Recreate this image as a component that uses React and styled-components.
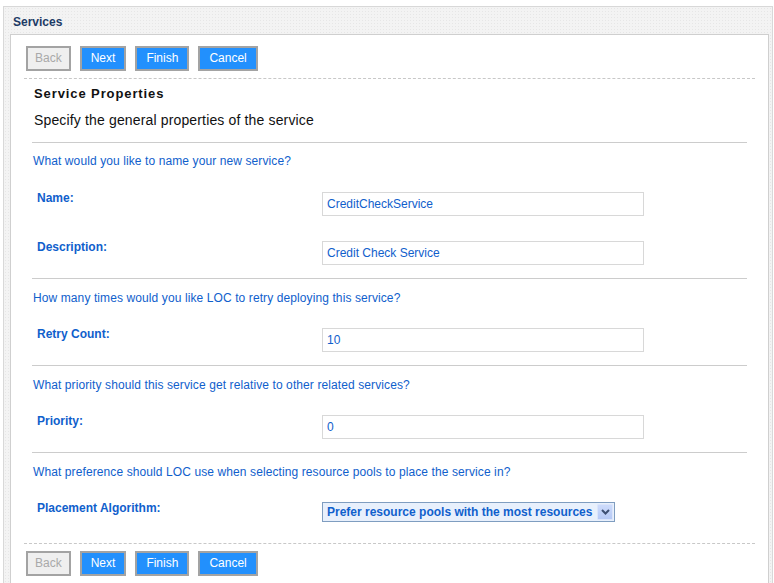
import React from 'react';
import styled, { createGlobalStyle } from 'styled-components';

const GlobalStyle = createGlobalStyle`
  html, body {
    margin: 0;
    padding: 0;
    background: #ffffff;
    font-family: "Liberation Sans", Arial, sans-serif;
  }
`;

const Panel = styled.div`
  margin: 6px 1px 0 3px;
  border: 1px solid #d8d8d8;
  border-bottom: none;
  background-color: #f3f3f3;
  background-image: radial-gradient(#e6e6e6 0.6px, transparent 0.6px);
  background-size: 3px 3px;
  padding: 0 3px 0 6px;
`;

const PanelHeader = styled.div`
  height: 27px;
  line-height: 30px;
  padding-left: 3px;
  font-size: 12px;
  font-weight: bold;
  color: #1d3b66;
`;

const Content = styled.div`
  background: #ffffff;
  border: 1px solid #cfcfcf;
  border-bottom: none;
  padding: 11px 13px 8px 13px;
`;

const ButtonBar = styled.div`
  display: flex;
  gap: 9px;
  padding-left: 2px;
`;

const Button = styled.button`
  height: 25px;
  padding: 0 ${p => (p.disabled ? '7px' : '9px')};
  font-family: "Liberation Sans", Arial, sans-serif;
  font-size: 12px;
  line-height: 19px;
  border: 2px solid #a3a3a3;
  background: ${p => (p.disabled ? '#efefef' : '#2290fd')};
  color: ${p => (p.disabled ? '#a9a9a9' : '#ffffff')};
  cursor: ${p => (p.disabled ? 'default' : 'pointer')};
`;

const DashedRule = styled.div`
  border-top: 1px dashed #c8c8c8;
  margin: ${p => p.$margin};
`;

const Main = styled.div`
  padding: 0 8px;
`;

const Title = styled.div`
  font-size: 13px;
  font-weight: bold;
  line-height: 15px;
  color: #111;
  padding-left: 2px;
  letter-spacing: 0.9px;
`;

const Subtitle = styled.div`
  font-size: 14px;
  line-height: 18px;
  color: #111;
  padding-left: 2px;
  margin-top: 10px;
  padding-bottom: 13px;
  letter-spacing: 0.15px;
`;

const Section = styled.div`
  border-top: 1px solid #cccccc;
  padding: ${p => (p.$first ? '10px' : '11px')} 0 13px 0;
`;

const Question = styled.div`
  font-size: 12px;
  line-height: 16px;
  color: #1060cc;
  padding-left: 1px;
  letter-spacing: 0.1px;
  margin-bottom: ${p => (p.$first ? '23px' : '22px')};
`;

const Row = styled.div`
  display: grid;
  grid-template-columns: 290px 322px;
  align-items: start;
  & + & {
    margin-top: 25px;
  }
`;

const Label = styled.div`
  font-size: 12px;
  font-weight: bold;
  line-height: 14px;
  color: #1060cc;
  padding-left: 5px;
  margin-top: -1px;
`;

const TextInput = styled.input`
  box-sizing: border-box;
  width: 322px;
  height: 24px;
  border: 1px solid #d8d8d8;
  padding: 0 4px;
  font-family: "Liberation Sans", Arial, sans-serif;
  font-size: 12px;
  color: #1060cc;
  outline: none;
`;

const SelectBox = styled.div`
  box-sizing: border-box;
  width: 293px;
  height: 20px;
  display: flex;
  align-items: center;
  justify-content: space-between;
  border: 1px solid #7f9dc0;
  background: #e8f0fc;
  padding: 0 1px 0 4px;
  font-size: 12px;
  font-weight: bold;
  color: #1060cc;
  white-space: nowrap;
`;

const ArrowBox = styled.span`
  width: 16px;
  height: 16px;
  display: flex;
  align-items: center;
  justify-content: center;
  background: linear-gradient(#cddbfb, #b6c9f5);
  border: 1px solid #dbe5fb;
  border-radius: 1px;
  box-sizing: border-box;
`;

const BottomSection = styled(Section)`
  padding-bottom: 21px;
`;

const Buttons = () => (
  <ButtonBar>
    <Button disabled>Back</Button>
    <Button>Next</Button>
    <Button>Finish</Button>
    <Button>Cancel</Button>
  </ButtonBar>
);

export default function App() {
  return (
    <>
      <GlobalStyle />
      <Panel>
        <PanelHeader>Services</PanelHeader>
        <Content>
          <Buttons />
          <DashedRule $margin="7px 0 7px 0" />
          <Main>
            <Title>Service Properties</Title>
            <Subtitle>Specify the general properties of the service</Subtitle>

            <Section $first>
              <Question $first>What would you like to name your new service?</Question>
              <Row>
                <Label>Name:</Label>
                <TextInput defaultValue="CreditCheckService" />
              </Row>
              <Row>
                <Label>Description:</Label>
                <TextInput defaultValue="Credit Check Service" />
              </Row>
            </Section>

            <Section>
              <Question>How many times would you like LOC to retry deploying this service?</Question>
              <Row>
                <Label>Retry Count:</Label>
                <TextInput defaultValue="10" />
              </Row>
            </Section>

            <Section>
              <Question>What priority should this service get relative to other related services?</Question>
              <Row>
                <Label>Priority:</Label>
                <TextInput defaultValue="0" />
              </Row>
            </Section>

            <BottomSection>
              <Question>What preference should LOC use when selecting resource pools to place the service in?</Question>
              <Row>
                <Label>Placement Algorithm:</Label>
                <SelectBox>
                  <span>Prefer resource pools with the most resources</span>
                  <ArrowBox>
                    <svg width="9" height="6" viewBox="0 0 9 6">
                      <path d="M1 1 L4.5 4.5 L8 1" fill="none" stroke="#3d4f73" strokeWidth="2" />
                    </svg>
                  </ArrowBox>
                </SelectBox>
              </Row>
            </BottomSection>
          </Main>
          <DashedRule $margin="0 0 7px 0" />
          <Buttons />
        </Content>
      </Panel>
    </>
  );
}
